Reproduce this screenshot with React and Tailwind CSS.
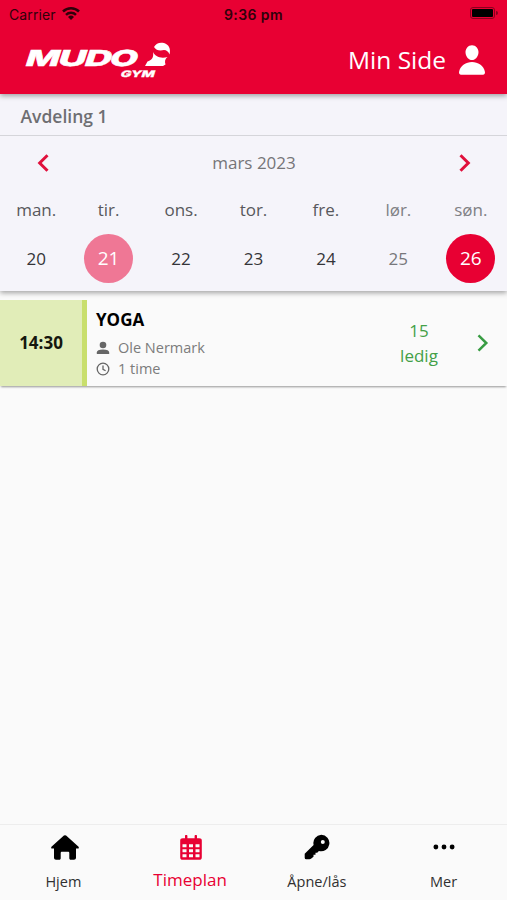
import clsx from "clsx";
import { IoEllipsisHorizontal, IoPerson } from "react-icons/io5";

const days = [
  { name: "man.", date: 20 },
  { name: "tir.", date: 21, today: true },
  { name: "ons.", date: 22 },
  { name: "tor.", date: 23 },
  { name: "fre.", date: 24 },
  { name: "lør.", date: 25, weekend: true },
  { name: "søn.", date: 26, weekend: true, selected: true },
];

const tabs = [
  { label: "Hjem", icon: <HomeIcon /> },
  { label: "Timeplan", icon: <CalendarIcon />, active: true },
  { label: "Åpne/lås", icon: <KeyIcon /> },
  { label: "Mer", icon: <IoEllipsisHorizontal className="size-[26px]" /> },
];

function HomeIcon() {
  return (
    <svg
      viewBox="0 0 28 25"
      fill="currentColor"
      className="ml-1 h-[25px] w-7"
    >
      <path d="M12.900.6a1.700 1.700 0 0 1 2.200 0l12.200 11c1 1 .5 2-.8 2H25v9.200c0 1.300-.9 2-2 2h-3.200c-1 0-1.500-.6-1.500-1.500v-5.300c0-.8-.5-1.300-1.300-1.300h-6c-.8 0-1.300.5-1.300 1.300v5.300c0 .9-.5 1.500-1.500 1.500H5c-1.100 0-2-.7-2-2v-9.200H1.500c-1.300 0-1.800-1-.8-2z" />
    </svg>
  );
}

function CalendarIcon() {
  return (
    <svg
      viewBox="0 0 22 25"
      fill="currentColor"
      fillRule="evenodd"
      className="ml-0.5 h-[25px] w-[22px]"
    >
      <path d="M5 1a1.200 1.200 0 0 1 2.400 0v2.200h7.200V1A1.200 1.200 0 0 1 17 1v2.200h2.200A2.600 2.600 0 0 1 21.800 6v16.200a2.600 2.600 0 0 1-2.600 2.600H2.800a2.600 2.600 0 0 1-2.600-2.600V6a2.600 2.600 0 0 1 2.600-2.800H5zM2.500 9.300v2.900h4V9.300zm6.500 0v2.900h4V9.300zm6.500 0v2.900h4V9.300zm-13 5v2.900h4v-2.900zm6.500 0v2.900h4v-2.900zm6.500 0v2.900h4v-2.900zm-13 5v2.900h4v-2.900zm6.500 0v2.900h4v-2.900zm6.500 0v2.900h4v-2.900z" />
    </svg>
  );
}

function KeyIcon() {
  return (
    <svg
      viewBox="0 0 26 26"
      fill="currentColor"
      fillRule="evenodd"
      className="size-[26px]"
    >
      <path d="M17.300.7a8.300 8.300 0 1 1-2.400 16.300l-1.700 1.700h-1.700v2H9.500v2L7.300 24.600a3 3 0 0 1-2 .6H2.200a1.500 1.500 0 0 1-1.500-1.500v-3.900l8.900-8.900A8.300 8.300 0 0 1 17.300.7zm1.500 5.200a2 2 0 1 0 0 4 2 2 0 0 0 0-4z" />
    </svg>
  );
}

function TrainerIcon() {
  return (
    <svg viewBox="0 0 14 14" fill="currentColor" className="size-3.5">
      <circle cx="7" cy="4" r="3.300" />
      <path d="M.8 13v-1.500C.8 9.500 3 8.500 7 8.500s6.200 1 6.200 3V13z" />
    </svg>
  );
}

function ClockIcon() {
  return (
    <svg
      viewBox="0 0 14 14"
      fill="none"
      stroke="currentColor"
      strokeWidth="1.3"
      className="size-3.5"
    >
      <circle cx="7" cy="7" r="5.800" />
      <path d="M7 3.500V7.300l2.600 1.500" />
    </svg>
  );
}

function Chevron({ left, className }) {
  return (
    <svg
      viewBox="0 0 12 18"
      fill="none"
      stroke="currentColor"
      className={clsx("h-[18px] w-3", className)}
    >
      <path d={left ? "M10.5 1.3 2.7 9l7.8 7.7" : "M1.5 1.3 9.3 9l-7.8 7.7"} />
    </svg>
  );
}

function Logo() {
  return (
    <svg
      viewBox="0 0 154 40"
      className="-ml-1 h-10 w-[154px] fill-white font-['Inter'] font-extrabold"
    >
      <text
        transform="translate(4 25) skewX(-18)"
        fontSize="22"
        className="stroke-white stroke-[0.5]"
      >
        <tspan x="0" textLength="34" lengthAdjust="spacingAndGlyphs">
          M
        </tspan>
        <tspan x="32.5" textLength="28" lengthAdjust="spacingAndGlyphs">
          U
        </tspan>
        <tspan x="59" textLength="27" lengthAdjust="spacingAndGlyphs">
          D
        </tspan>
        <tspan x="84" textLength="28" lengthAdjust="spacingAndGlyphs">
          O
        </tspan>
      </text>
      <text
        transform="translate(100 36) skewX(-18)"
        fontSize="9"
        textLength="34"
        lengthAdjust="spacingAndGlyphs"
        className="stroke-white stroke-[0.3]"
      >
        GYM
      </text>
      <path d="M134 6c2-4 6-5 10-4 5 1.500 7 6 5.500 11.500C148.500 10.500 146.500 9 144 9c-4 1-8 .5-10-3z" />
      <path d="M133 11c2 4 7 7 14.500 5-2.500 2-3 4-2 7.500L143 25h-18l2.500-4.500c4-1 6.500-4 5.500-9.500z" />
    </svg>
  );
}

function Header() {
  return (
    <header className="relative z-10 h-[94px] bg-[#e80033] shadow-[0_2px_5px_rgba(0,0,0,0.35)]">
      <div className="grid h-7 grid-cols-3 items-center px-[9px] font-['Inter'] text-[14px] text-[#30000a]">
        <div className="flex items-center gap-[6px]">
          <span className="tracking-[0.1px]">Carrier</span>
          <svg viewBox="0 0 18 14" className="-mt-0.5 h-3.5 w-[18px]">
            <g fill="none" stroke="currentColor" strokeWidth="2.5">
              <path d="M1 5.500a11.500 11.500 0 0 1 16 0" />
              <path d="M4 8.800a7.200 7.200 0 0 1 10 0" />
            </g>
            <path d="M9 14 6 11a4.300 4.300 0 0 1 6 0z" fill="currentColor" />
          </svg>
        </div>
        <span className="text-center font-semibold tracking-[0.4px] whitespace-nowrap">
          9:36 pm
        </span>
        <div className="flex items-center justify-end gap-px pb-0.5">
          <div className="h-3 w-[25px] rounded-[3px] border border-[#8a001e] p-px">
            <div className="h-full rounded-[1px] bg-black" />
          </div>
          <div className="h-1 w-0.5 rounded-r bg-[#8a001e]" />
        </div>
      </div>
      <div className="flex h-[66px] items-center justify-between pr-[19px] pl-6">
        <div className="pb-px">
          <Logo />
        </div>
        <div className="flex items-center gap-[10px] text-white">
          <span className="-mt-0.5 text-[24.5px] leading-8">Min Side</span>
          <IoPerson className="-mt-0.5 size-[32px] scale-y-105" />
        </div>
      </div>
    </header>
  );
}

function Calendar() {
  return (
    <section className="relative h-[197px] bg-[#f5f4fa] shadow-[0_2px_5px_rgba(0,0,0,0.35)]">
      <div className="h-[42px] border-b border-[#d5d5da] pt-[10px] pl-[20.5px] text-[17.5px] leading-6 font-semibold text-[#6e6e72]">
        Avdeling 1
      </div>
      <div className="flex h-[54px] items-center justify-between pr-9 pl-[37px]">
        <Chevron left className="stroke-3 text-[#e0103c]" />
        <span className="text-[17px] text-[#757578]">mars 2023</span>
        <Chevron className="stroke-3 text-[#e0103c]" />
      </div>
      <div className="grid grid-cols-7 text-center text-[17px]">
        {days.map((day) => (
          <div key={day.date} className="flex flex-col items-center">
            <span
              className={clsx(
                "mt-2 leading-6",
                day.weekend ? "text-[#808084]" : "text-[#58585c]",
              )}
            >
              {day.name}
            </span>
            <span
              className={clsx(
                "mt-[12px] flex size-[49px] items-center justify-center rounded-full",
                day.today && "bg-[#ef7795] text-[19px] text-white",
                day.selected && "bg-[#e80033] text-[19px] text-white",
                !day.today && !day.selected && day.weekend && "text-[#77777b]",
                !day.today && !day.selected && !day.weekend && "text-[#343438]",
              )}
            >
              {day.date}
            </span>
          </div>
        ))}
      </div>
    </section>
  );
}

function ClassRow() {
  return (
    <div className="mt-[9px] flex h-[86px] bg-[#fafafa] shadow-[0_2px_2px_-1px_rgba(0,0,0,0.4)]">
      <div className="flex w-[87px] items-center justify-center border-r-5 border-[#c9df6d] bg-[#e1edb8] text-[17px] font-bold text-[#15170e]">
        14:30
      </div>
      <div className="flex-1 pt-2 pl-[9px]">
        <div className="text-[17px] leading-6 font-bold text-black">YOGA</div>
        <div className="mt-[5px] flex items-center gap-[8px] text-[14.5px] leading-[21px] text-[#7c7c7c]">
          <span className="text-[#666]">
            <TrainerIcon />
          </span>
          Ole Nermark
        </div>
        <div className="flex items-center gap-[8px] text-[14.5px] leading-[21px] text-[#7c7c7c]">
          <span className="text-[#666]">
            <ClockIcon />
          </span>
          1 time
        </div>
      </div>
      <div className="flex w-[60px] flex-col justify-center text-center text-[17px] leading-[25px] text-[#43a047]">
        <span>15</span>
        <span>ledig</span>
      </div>
      <div className="flex w-[58px] items-center justify-center">
        <Chevron className="ml-[9px] stroke-[2.5] text-[#389c43]" />
      </div>
    </div>
  );
}

function TabBar() {
  return (
    <nav className="mt-auto grid h-[76px] grid-cols-4 border-t border-[#ededed] bg-[#fafafa]">
      {tabs.map((tab) => (
        <div
          key={tab.label}
          className={clsx(
            "flex flex-col items-center pt-[9px]",
            tab.active ? "text-[#e80033]" : "text-black",
          )}
        >
          <div className="flex h-[26px] items-center">{tab.icon}</div>
          <span
            className={clsx(
              "mt-2",
              tab.active
                ? "text-[17px] leading-6"
                : "pt-0.5 text-[14.5px] leading-6 text-[#303030]",
            )}
          >
            {tab.label}
          </span>
        </div>
      ))}
    </nav>
  );
}

function App() {
  return (
    <main className="flex h-[900px] w-[507px] flex-col overflow-hidden bg-[#fafafa] font-['Open_Sans',sans-serif]">
      <Header />
      <Calendar />
      <ClassRow />
      <TabBar />
    </main>
  );
}

export default App;
